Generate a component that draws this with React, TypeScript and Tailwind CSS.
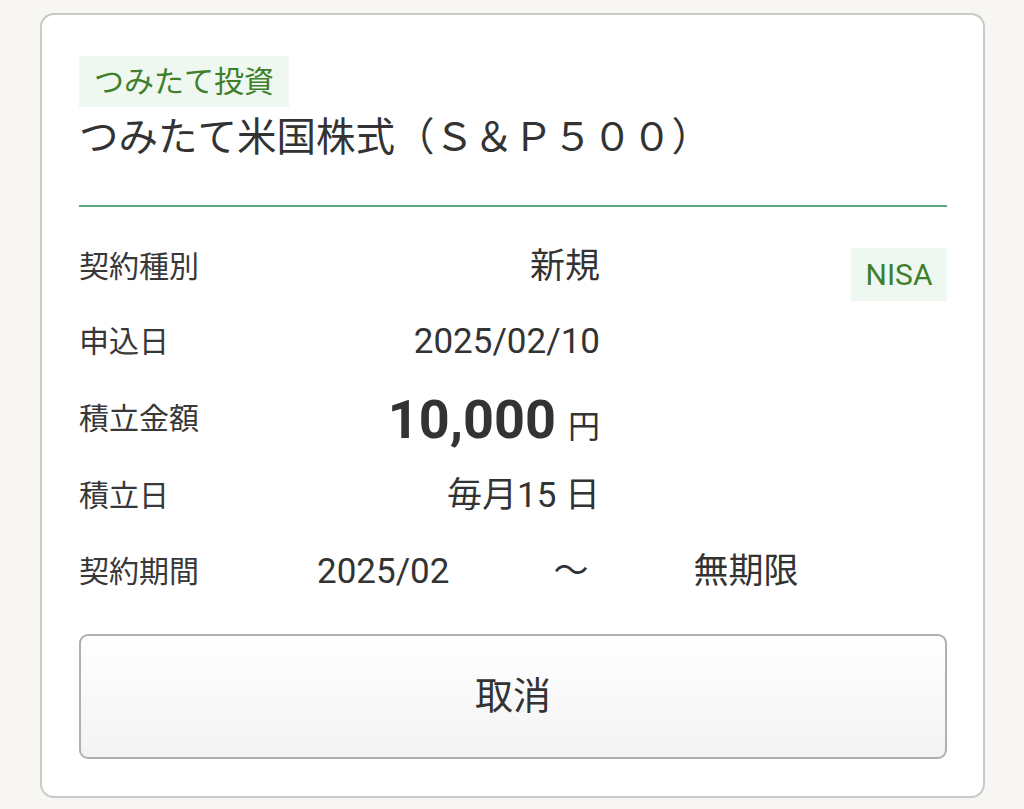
import React from 'react'

const labelClass = 'w-[238px] shrink-0 text-[30px] text-[#383838]'
const valueClass = 'w-[283px] shrink-0 pt-[3px] text-right text-[35px] text-[#333]'

function Row({ label, h, children }: { label: string; h: string; children?: React.ReactNode }) {
  return (
    <div className={`flex items-center ${h}`}>
      <div className={labelClass}>{label}</div>
      {children}
    </div>
  )
}

export default function App() {
  return (
    <div className="h-[809px] overflow-hidden bg-[#f7f6f2] pt-[13px] font-[family-name:Roboto,'Noto_Sans_CJK_JP',sans-serif]">
      <div className="ml-[40px] mr-[39px] rounded-[14px] border-2 border-[#c9c9c9] bg-white pl-[37px] pr-[36px] pt-[41px] pb-[37px]">
        {/* 商品 */}
        <div className="inline-flex h-[51px] items-center bg-[#eef8f0] px-[15px] text-[30px] text-[#3f7f2b]">
          つみたて投資
        </div>
        <div className="mt-[8px] text-[39.5px] leading-[46px] text-[#333]">
          つみたて米国株式（Ｓ＆Ｐ５００）
        </div>
        <div className="mt-[44px] h-[2px] bg-[#5aab7b]" />

        {/* 契約内容 */}
        <div className="mt-[22px]">
          <div className="flex h-[74px] items-center">
            <div className={labelClass}>契約種別</div>
            <div className={valueClass}>新規</div>
            <div className="flex flex-1 justify-end self-start pt-[19px]">
              <span className="flex h-[53px] w-[96px] items-center justify-center bg-[#eef8f0] text-[30px] text-[#3f7f2b]">
                NISA
              </span>
            </div>
          </div>
          <Row label="申込日" h="h-[76px]">
            <div className={valueClass}>2025/02/10</div>
          </Row>
          <Row label="積立金額" h="h-[78px]">
            <div className={valueClass}>
              <span className="text-[54px] font-bold">10,000</span>
              <span className="ml-[12px] text-[32px]">円</span>
            </div>
          </Row>
          <Row label="積立日" h="h-[76px]">
            <div className={valueClass}>毎月15 日</div>
          </Row>
          <Row label="契約期間" h="h-[76px]">
            <div className="flex items-center pt-[3px] text-[35px] text-[#333]">
              <span>2025/02</span>
              <span className="ml-[104px]">～</span>
              <span className="ml-[105px]">無期限</span>
            </div>
          </Row>
        </div>

        <button className="mt-[25px] flex h-[125px] w-full items-center justify-center rounded-[9px] border-2 border-[#b0b0b0] bg-gradient-to-b from-white to-[#f3f3f3] text-[38px] text-[#333]">
          取消
        </button>
      </div>
    </div>
  )
}
